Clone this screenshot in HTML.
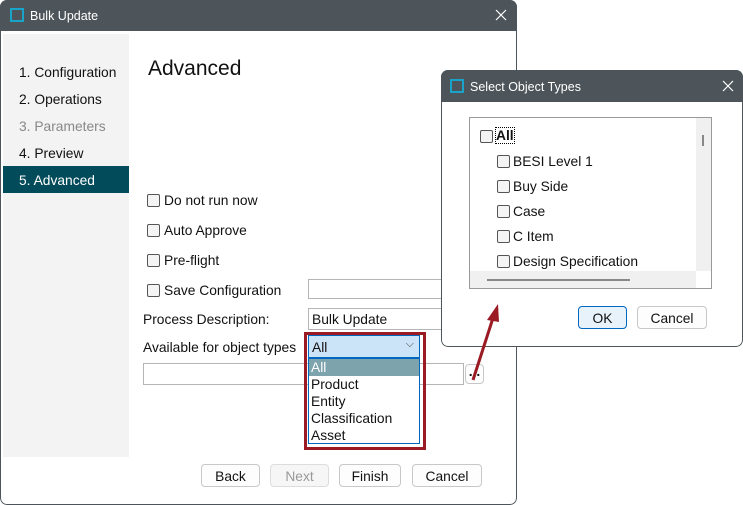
<!DOCTYPE html>
<html><head><style>
*{box-sizing:border-box;margin:0;padding:0}
body{width:743px;height:505px;background:#fff;position:relative;overflow:hidden;font-family:"Liberation Sans",sans-serif;font-size:13.8px;color:#111}
.a{position:absolute}
.t{margin-top:2px}
.dlg{border-radius:7px;overflow:hidden;background:#fff}
.bd{border:1px solid #4d555a;border-radius:7px;pointer-events:none}
.tb{background:#4d555a;color:#fff;font-size:12.5px}
.ic{width:14px;height:14px;border:2px solid #1aa3c8}
.cb{width:13px;height:13px;border:1px solid #555;border-radius:2px;background:#f4f4f4}
.inp{border:1px solid #b5b5b5;background:#fff}
.btn{border:1px solid #c8c8c8;border-radius:4px;background:#fdfdfd;text-align:center;line-height:21px;padding-top:1px}
</style></head><body>
<div class="a dlg" style="left:0;top:0;width:517px;height:505px">
 <div class="a tb" style="left:0;top:0;width:517px;height:31px">
  <div class="a ic" style="left:10px;top:8px"></div>
  <div class="a" style="left:30px;top:9px">Bulk Update</div>
  <svg class="a" style="left:495px;top:9px" width="12" height="12"><path d="M1 1L11 11M11 1L1 11" stroke="#fff" stroke-width="1.2"/></svg>
 </div>
 <div class="a" style="left:3px;top:34px;width:126px;height:423px;background:#f3f3f3"></div>
 <div class="a t" style="left:19px;top:63px">1. Configuration</div>
 <div class="a t" style="left:19px;top:90px">2. Operations</div>
 <div class="a t" style="left:19px;top:117px;color:#888">3. Parameters</div>
 <div class="a t" style="left:19px;top:144px">4. Preview</div>
 <div class="a" style="left:3px;top:166px;width:126px;height:27px;background:#024b5a"></div>
 <div class="a t" style="left:19px;top:171px;color:#fff">5. Advanced</div>
 <div class="a t" style="left:148px;top:55px;font-size:21px">Advanced</div>
 <div class="a cb" style="left:147px;top:194px"></div><div class="a t" style="left:164px;top:191px">Do not run now</div>
 <div class="a cb" style="left:147px;top:224px"></div><div class="a t" style="left:164px;top:221px">Auto Approve</div>
 <div class="a cb" style="left:147px;top:254px"></div><div class="a t" style="left:164px;top:251px">Pre-flight</div>
 <div class="a cb" style="left:147px;top:284px"></div><div class="a t" style="left:164px;top:281px">Save Configuration</div>
 <div class="a inp" style="left:308px;top:279px;width:140px;height:20px"></div>
 <div class="a t" style="left:143px;top:310px">Process Description:</div>
 <div class="a inp" style="left:308px;top:308px;width:140px;height:22px;padding:3px 3px 0">Bulk Update</div>
 <div class="a t" style="left:143px;top:338px">Available for object types</div>
 <div class="a inp" style="left:143px;top:363px;width:321px;height:22px"></div>
 <div class="a btn" style="left:465px;top:364px;width:19px;height:20px;line-height:12px;font-weight:bold">...</div>
 <div class="a" style="left:304px;top:332px;width:122px;height:118px;border:3px solid #9b1b24"></div>
 <div class="a" style="left:308px;top:335px;width:112px;height:23px;background:#cce4f7;border:1px solid #0067c0;padding:4px 3px 0">All<span class="a" style="right:5px;top:2px;font-size:11px;color:#444">⌵</span></div>
 <div class="a" style="left:308px;top:358px;width:112px;height:86px;border:1px solid #0067c0;background:#fff;line-height:17px">
  <div style="background:#7da3ad;color:#fff;padding-left:2px">All</div>
  <div style="padding-left:2px">Product</div><div style="padding-left:2px">Entity</div><div style="padding-left:2px">Classification</div><div style="padding-left:2px">Asset</div>
 </div>
 <div class="a btn" style="left:201px;top:464px;width:59px;height:23px">Back</div>
 <div class="a btn" style="left:270px;top:464px;width:59px;height:23px;color:#999;background:#f6f6f6;border-color:#ddd">Next</div>
 <div class="a btn" style="left:339px;top:464px;width:62px;height:23px">Finish</div>
 <div class="a btn" style="left:412px;top:464px;width:70px;height:23px">Cancel</div>
 <div class="a bd" style="left:0;top:0;width:517px;height:505px"></div>
</div>
<div class="a dlg" style="left:441px;top:70px;width:302px;height:277px">
 <div class="a tb" style="left:0;top:0;width:302px;height:32px">
  <div class="a ic" style="left:9px;top:9px"></div>
  <div class="a" style="left:29px;top:10px">Select Object Types</div>
  <svg class="a" style="left:281px;top:10px" width="12" height="12"><path d="M1 1L11 11M11 1L1 11" stroke="#fff" stroke-width="1.2"/></svg>
 </div>
 <div class="a" style="left:28px;top:47px;width:243px;height:172px;border:1px solid #999">
  <div class="a" style="left:226px;top:0;width:15px;height:153px;background:#f0f0f0"><div class="a" style="left:6px;top:17px;width:2px;height:11px;background:#888"></div></div>
  <div class="a" style="left:0;top:153px;width:226px;height:17px;background:#f0f0f0"><div class="a" style="left:17px;top:8px;width:143px;height:2px;background:#888"></div></div>
  <div class="a cb" style="left:10px;top:12px"></div><div class="a t" style="left:26px;top:8px;font-weight:bold;outline:1px dotted #000">All</div>
  <div class="a cb" style="left:27px;top:37px"></div><div class="a t" style="left:43px;top:34px">BESI Level 1</div>
  <div class="a cb" style="left:27px;top:62px"></div><div class="a t" style="left:43px;top:59px">Buy Side</div>
  <div class="a cb" style="left:27px;top:87px"></div><div class="a t" style="left:43px;top:84px">Case</div>
  <div class="a cb" style="left:27px;top:112px"></div><div class="a t" style="left:43px;top:109px">C Item</div>
  <div class="a cb" style="left:27px;top:137px"></div><div class="a t" style="left:43px;top:134px">Design Specification</div>
 </div>
 <div class="a btn" style="left:137px;top:236px;width:49px;height:23px;border-color:#0067c0;background:#e8f2fb">OK</div>
 <div class="a btn" style="left:196px;top:236px;width:70px;height:23px">Cancel</div>
 <div class="a bd" style="left:0;top:0;width:302px;height:277px"></div>
</div>
<svg class="a" style="left:0;top:0;z-index:5" width="743" height="505"><line x1="473" y1="380" x2="493" y2="318" stroke="#9b1b24" stroke-width="3"/><polygon points="498,304 487,320 499,322" fill="#9b1b24"/></svg>
</body></html>
